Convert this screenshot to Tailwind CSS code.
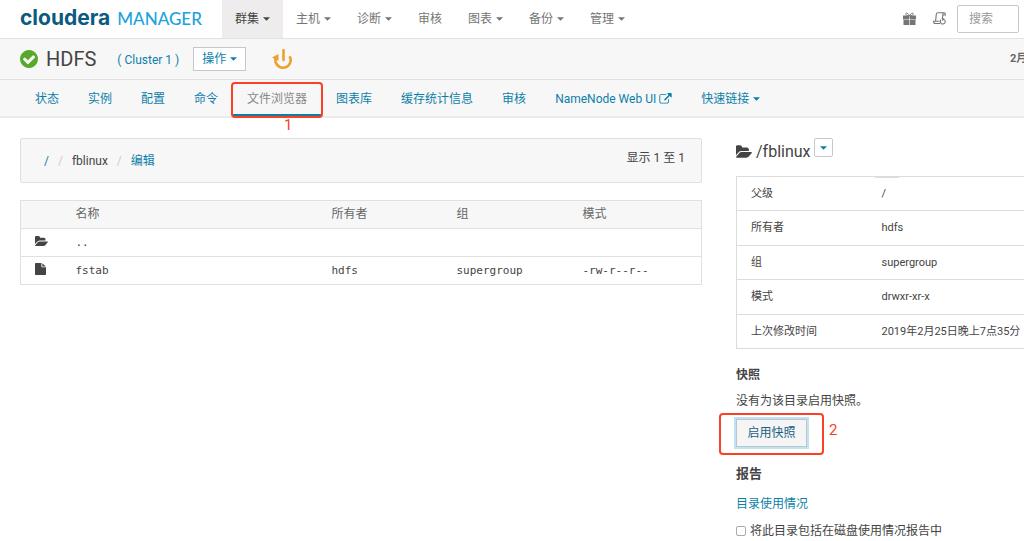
<!DOCTYPE html>
<html lang="zh-CN">
<head>
<meta charset="utf-8">
<meta name="viewport" content="width=device-width, initial-scale=1">
<title>HDFS - Cloudera Manager</title>
<script src="https://cdn.jsdelivr.net/npm/@tailwindcss/browser@4"></script>
</head>
<body class="min-h-screen overflow-x-hidden bg-white font-[Roboto,'Noto_Sans_CJK_SC',sans-serif] text-[12px] leading-[18px] text-[#444]">
<svg class="hidden" aria-hidden="true">
  <symbol id="caret" viewBox="0 0 8 4"><path fill="currentColor" d="M0 0h8L4 4z"/></symbol>
  <symbol id="folder" viewBox="0 128 1824 1408"><path fill="currentColor" d="M1815 952q0 31-31 66l-336 396q-43 51-120.5 86.5t-143.5 35.5h-1088q-34 0-60.5-13t-26.5-43q0-31 31-66l336-396q43-51 120.5-86.5t143.5-35.5h1088q34 0 60.5 13t26.5 43zm-343-344v160h-832q-94 0-197 47.5t-164 119.5l-337 396-5 6q0-4-.5-12.5t-.5-12.5v-960q0-92 66-158t158-66h320q92 0 158 66t66 158v32h544q92 0 158 66t66 158z"/></symbol>
</svg>

<header class="flex h-[39px] items-center border-b border-[#e2e2e2] pr-[5px] pl-[20px] text-[#757575]">
  <a href="#" class="flex w-[202px] items-baseline gap-[7px] pb-[2px] leading-[30px] whitespace-nowrap">
    <span class="font-[Inter,sans-serif] text-[21px] font-bold text-[#0b5a80]">cloudera</span>
    <span class="font-[Lato,sans-serif] text-[17px] font-medium text-[#1ba3dc]">MANAGER</span>
  </a>
  <nav class="flex h-[38px] flex-1 items-stretch" aria-label="主导航">
    <button class="flex items-center gap-1 bg-[#eeecec] px-[13px] text-[#444]">群集<svg class="h-[4px] w-[7px]"><use href="#caret"/></svg></button>
    <button class="flex items-center gap-1 px-[13px]">主机<svg class="h-[4px] w-[7px]"><use href="#caret"/></svg></button>
    <button class="flex items-center gap-1 px-[13px]">诊断<svg class="h-[4px] w-[7px]"><use href="#caret"/></svg></button>
    <a href="#" class="flex items-center px-[13px]">审核</a>
    <button class="flex items-center gap-1 px-[13px]">图表<svg class="h-[4px] w-[7px]"><use href="#caret"/></svg></button>
    <button class="flex items-center gap-1 px-[13px]">备份<svg class="h-[4px] w-[7px]"><use href="#caret"/></svg></button>
    <button class="flex items-center gap-1 px-[13px]">管理<svg class="h-[4px] w-[7px]"><use href="#caret"/></svg></button>
  </nav>
  <button class="mr-[17px] pb-[2px]" aria-label="新增功能">
    <svg class="h-[13px] w-[13px]" viewBox="0 0 13 13" fill="currentColor"><path d="M0 3.500h6.200v4H0zM6.800 3.500H13v4H6.800zM.5 8h5.700v5H.5zM6.800 8h5.700v5H6.800z"/><path d="M6.500 4C5 1 3.300.4 2.900 1.600 2.500 3 4 3.700 6.500 4c2.500-.3 4-1 3.600-2.400C9.700.4 8 1 6.500 4z" fill="none" stroke="currentColor"/></svg>
  </button>
  <button class="mr-[11px] pb-[2px]" aria-label="正在运行的命令">
    <svg class="h-[13px] w-[13px]" viewBox="0 0 13 13" fill="none" stroke="currentColor" stroke-width="1.100"><path d="M2.600 9 3.300 2.200Q3.500.7 4.800.7h6.300q1.300 0 1.300 2.300H9.800M9.800 3 9.300 6.500M9.800 3Q9.800.7 11.100.7M7 11.500H2Q.6 11.500.6 9.200h5.800"/><path d="M8 7.700a2.500 2.500 0 1 0 3.400-.1"/><path d="M8.800 5.500 12 7l-2.600 2z" fill="currentColor" stroke="none"/></svg>
  </button>
  <input type="search" aria-label="搜索" placeholder="搜索" class="h-[28px] w-[62px] rounded-[2px] border border-[#c8c8c8] bg-white px-[11px] placeholder:text-[#999]">
</header>

<section class="flex h-[41px] items-center border-b border-[#e0e0e0] bg-[#f7f7f7] pl-[20px]">
  <svg class="mr-[8px] h-[18px] w-[18px] text-[#58a82c]" viewBox="128 128 1536 1536" role="img" aria-label="运行状况良好"><path fill="currentColor" d="M1412 734q0-28-18-46l-91-90q-19-19-45-19t-45 19l-408 407-226-226q-19-19-45-19t-45 19l-91 90q-18 18-18 46 0 27 18 45l362 362q19 19 45 19 27 0 46-19l543-543q18-18 18-45zm252 162q0 209-103 385.500t-279.500 279.500-385.500 103-385.500-103-279.500-279.500-103-385.500 103-385.500 279.500-279.500 385.500-103 385.500 103 279.500 279.500 103 385.500z"/></svg>
  <h1 class="mr-[21px] text-[20px]">HDFS</h1>
  <a href="#" class="mr-[14px] pt-px whitespace-nowrap text-[#0c7fa9]">( Cluster 1 )</a>
  <button class="flex h-[24px] items-center gap-[4px] border border-[#c8c8c8] bg-white px-[8px] text-[#0c7fa9]">操作<svg class="h-[4px] w-[7px]"><use href="#caret"/></svg></button>
  <button class="ml-[26px] text-[#eda02d]" aria-label="需要重启">
    <svg class="h-[21px] w-[21px]" viewBox="0 0 21 21" fill="none" stroke="currentColor" stroke-width="2.600"><path d="M11.500 1v10" stroke-linecap="round"/><path d="M4.200 7.800a7.600 7.600 0 1 0 13.300-.6"/><path d="M0 8.500 6.500 5v7z" fill="currentColor" stroke="none"/></svg>
  </button>
  <span class="ml-auto w-[14px] overflow-hidden text-[11px] font-bold whitespace-nowrap text-[#666]">2月</span>
</section>

<nav class="flex h-[38px] items-stretch gap-px border-b-2 border-[#ebebeb] bg-[#f7f7f7] pl-[21px] whitespace-nowrap text-[#0c7fa9]" aria-label="服务导航">
  <a href="#" class="flex items-center px-[14px] pt-[2px]">状态</a>
  <a href="#" class="flex items-center px-[14px] pt-[2px]">实例</a>
  <a href="#" class="flex items-center px-[14px] pt-[2px]">配置</a>
  <a href="#" class="flex items-center px-[14px] pt-[2px]">命令</a>
  <a href="#" aria-current="page" class="relative flex items-center px-[14px] pt-[2px] text-[#888]">文件浏览器
    <span class="absolute inset-x-0 -bottom-px h-[3px] bg-[#0c7fa9]"></span>
    <span class="absolute -inset-x-[2px] top-[2px] -bottom-[2px] rounded-[4px] border-2 border-[#fa4125]"></span>
    <span class="absolute top-[36px] left-[51px] text-[15px] text-[#fa4125]">1</span>
  </a>
  <a href="#" class="flex items-center px-[14px] pt-[2px]">图表库</a>
  <a href="#" class="flex items-center px-[14px] pt-[2px]">缓存统计信息</a>
  <a href="#" class="flex items-center px-[14px] pt-[2px]">审核</a>
  <a href="#" class="flex items-center gap-[3px] px-[14px] pt-[2px]">NameNode Web UI<svg class="mb-[2px] h-[11px] w-[13px]" viewBox="0 0 1792 1600"><path fill="currentColor" d="M1408 928v320q0 119-84.500 203.500t-203.500 84.500h-832q-119 0-203.500-84.500t-84.500-203.500v-832q0-119 84.500-203.500t203.500-84.500h704q14 0 23 9t9 23v64q0 14-9 23t-23 9h-704q-66 0-113 47t-47 113v832q0 66 47 113t113 47h832q66 0 113-47t47-113v-320q0-14 9-23t23-9h64q14 0 23 9t9 23zm384-864v512q0 26-19 45t-45 19-45-19l-176-176-652 652q-10 10-23 10t-23-10l-114-114q-10-10-10-23t10-23l652-652-176-176q-19-19-19-45t19-45 45-19h512q26 0 45 19t19 45z"/></svg></a>
  <button class="flex items-center gap-[4px] px-[14px] pt-[2px]">快速链接<svg class="h-[4px] w-[7px]"><use href="#caret"/></svg></button>
</nav>

<div class="flex gap-[34px] pl-[20px]">
  <main class="min-w-0 flex-1 pt-[20px]">
    <div class="mb-[17px] flex h-[45px] items-start justify-between rounded-[2px] border border-[#e0e0e0] bg-[#f7f7f7] pr-[16px] pl-[23px]">
      <ol class="flex pt-[13px]">
        <li><a href="#" class="text-[#0c7fa9]">/</a></li>
        <li class="px-[9px] text-[#ccc]">/</li>
        <li>fblinux</li>
        <li class="px-[9px] text-[#ccc]">/</li>
        <li><a href="#" class="text-[#0c7fa9]">编辑</a></li>
      </ol>
      <p class="pt-[10px]">显示 1 至 1</p>
    </div>
    <table class="w-full table-fixed border-collapse border border-[#e0e0e0] text-left">
      <colgroup><col class="w-[55px]"><col class="w-[256px]"><col class="w-[125px]"><col class="w-[126px]"><col></colgroup>
      <thead>
        <tr class="h-[28px] border-b border-[#e0e0e0] bg-[#f7f7f7] text-[#666]">
          <td class="p-0"></td>
          <th class="p-0 pb-[2px] font-normal">名称</th>
          <th class="p-0 pb-[2px] font-normal">所有者</th>
          <th class="p-0 pb-[2px] font-normal">组</th>
          <th class="p-0 pb-[2px] font-normal">模式</th>
        </tr>
      </thead>
      <tbody class="font-['DejaVu_Sans_Mono',monospace] text-[11px]">
        <tr class="h-[28px] border-b border-[#e0e0e0]">
          <td class="p-0 pb-[4px] pl-[14px]"><svg class="h-[10px] w-[13px]"><use href="#folder"/></svg></td>
          <td class="p-0"><a href="#">..</a></td><td></td><td></td><td></td>
        </tr>
        <tr class="h-[28px]">
          <td class="p-0 pb-[4px] pl-[14px]"><svg class="h-[12px] w-[11px]" viewBox="128 0 1536 1792" preserveAspectRatio="none"><path fill="currentColor" d="M1152 512v-472q22 14 36 28l408 408q14 14 28 36h-472zm-128 32q0 40 28 68t68 28h544v1056q0 40-28 68t-68 28h-1344q-40 0-68-28t-28-68v-1600q0-40 28-68t68-28h800v544z"/></svg></td>
          <td class="p-0"><a href="#">fstab</a></td><td class="p-0">hdfs</td><td class="p-0">supergroup</td><td class="p-0">-rw-r--r--</td>
        </tr>
      </tbody>
    </table>
  </main>

  <aside class="w-[288px] shrink-0 pt-[20px] whitespace-nowrap">
    <div class="mb-[15px] flex h-[23px] items-start">
      <svg class="mt-[7px] mr-[4px] h-[13px] w-[16px]"><use href="#folder"/></svg>
      <h2 class="mt-[5px] mr-[3px] text-[16px]">/fblinux</h2>
      <button class="flex h-[19px] w-[19px] items-center justify-center rounded-[2px] border border-[#c8c8c8] text-[#0c7fa9]" aria-label="目录操作"><svg class="h-[4px] w-[7px]"><use href="#caret"/></svg></button>
    </div>
    <div class="relative">
      <span class="absolute top-0 left-[139px] h-[2px] w-[24px] bg-[#dcdcdc]"></span>
      <table class="w-full border-collapse border-y border-l border-[#dcdcdc] text-left text-[11px]">
        <tbody class="divide-y divide-[#dcdcdc]">
          <tr class="h-[34px] even:h-[35px]"><th class="w-[145px] p-0 pl-[14px] font-normal">父级</th><td class="p-0">/</td></tr>
          <tr class="h-[34px] even:h-[35px]"><th class="p-0 pl-[14px] font-normal">所有者</th><td class="p-0">hdfs</td></tr>
          <tr class="h-[34px] even:h-[35px]"><th class="p-0 pl-[14px] font-normal">组</th><td class="p-0">supergroup</td></tr>
          <tr class="h-[34px] even:h-[35px]"><th class="p-0 pl-[14px] font-normal">模式</th><td class="p-0">drwxr-xr-x</td></tr>
          <tr class="h-[34px] even:h-[35px]"><th class="p-0 pl-[14px] font-normal">上次修改时间</th><td class="p-0">2019年2月25日晚上7点35分</td></tr>
        </tbody>
      </table>
    </div>
    <h3 class="mt-[17px] font-bold">快照</h3>
    <p class="mt-[8px]">没有为该目录启用快照。</p>
    <div class="relative mt-[9px] w-max">
      <button class="block h-[28px] w-[71px] border border-[#b9c6cc] bg-[#f5f5f5] text-[#1b6280] ring-2 ring-[#bfe3f1]">启用快照</button>
      <span class="pointer-events-none absolute -top-[6px] -right-[17px] -bottom-[8px] -left-[17px] rounded-[4px] border-2 border-[#fa4125]"></span>
      <span class="absolute top-[2px] left-[93px] text-[15px] text-[#fa4125]">2</span>
    </div>
    <h3 class="mt-[18px] text-[13px] font-bold">报告</h3>
    <p class="mt-[12px]"><a href="#" class="text-[#0c7fa9]">目录使用情况</a></p>
    <label class="mt-[9px] flex items-center gap-[4px]"><input type="checkbox" class="h-[10px] w-[10px] appearance-none rounded-[2px] border border-[#aaa] bg-white checked:bg-[#0c7fa9]">将此目录包括在磁盘使用情况报告中</label>
  </aside>
</div>
</body>
</html>
